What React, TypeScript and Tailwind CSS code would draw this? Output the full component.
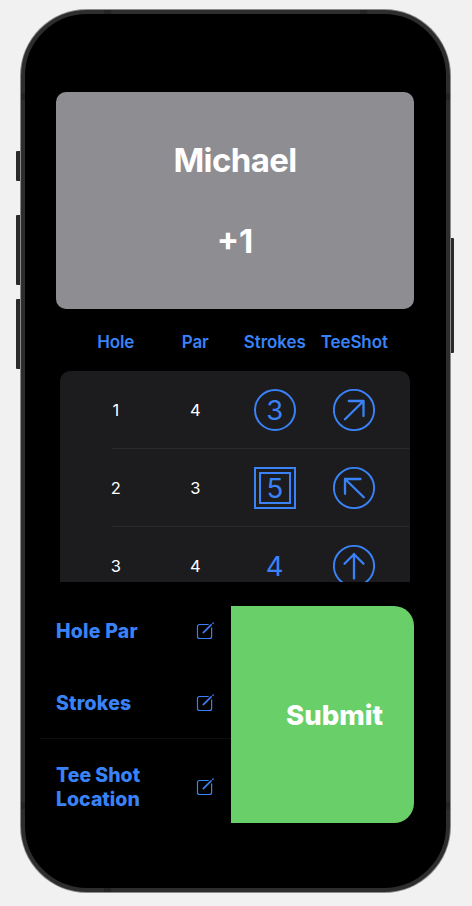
type IconProps = { className?: string };

const SANS = "font-['Inter','Liberation_Sans',sans-serif]";

const ARROWS = {
  right: 'M12 30.3 30.5 12M15.8 12H30.5V27',
  left: 'M30.8 30.3 12 12M27.5 12H12V26.8',
  up: 'M21 33.5V9M11.5 18.8 21 9.2 30.5 18.8',
};

function ShotIcon({ dir }: { dir: keyof typeof ARROWS }) {
  return (
    <svg className="size-[42px] shrink-0" viewBox="0 0 42 42" fill="none" stroke="#3a82f7" strokeLinecap="round" strokeLinejoin="round">
      <circle cx="21" cy="21" r="20.1" strokeWidth="1.9" />
      <path d={ARROWS[dir]} strokeWidth="2.3" />
    </svg>
  );
}

function EditIcon({ className = '' }: IconProps) {
  return (
    <svg className={`h-[17px] w-[17px] shrink-0 overflow-visible ${className}`} viewBox="0 0 17 17" fill="none" stroke="#3a82f7" strokeLinecap="round">
      <path d="M11.2 1.5H2.5a2 2 0 0 0-2 2v10a2 2 0 0 0 2 2h10.1a2 2 0 0 0 2-2V4.8" strokeWidth="1.2" />
      <path d="M6.3 9.6 14.1 1.9M15.9.2 16.1 0" strokeWidth="1.6" />
    </svg>
  );
}

function Strokes({ value, mark }: { value: number; mark: string }) {
  const digit = <span className="pt-0.5 text-[27.5px] leading-none font-normal">{value}</span>;
  if (mark === 'birdie') {
    return <div className="flex size-[42px] items-center justify-center rounded-full border-2 border-[#3a82f7]">{digit}</div>;
  }
  if (mark === 'double') {
    return (
      <div className="flex size-[42px] items-center justify-center border-2 border-[#3a82f7]">
        <div className="flex size-8 items-center justify-center border-2 border-[#3a82f7]">{digit}</div>
      </div>
    );
  }
  return <div className="flex size-[42px] items-center justify-center pt-px">{digit}</div>;
}

const HOLES: { hole: number; par: number; strokes: number; mark: string; dir: keyof typeof ARROWS }[] = [
  { hole: 1, par: 4, strokes: 3, mark: 'birdie', dir: 'right' },
  { hole: 2, par: 3, strokes: 5, mark: 'double', dir: 'left' },
  { hole: 3, par: 4, strokes: 4, mark: 'par', dir: 'up' },
];

function Phone({ children }: { children: React.ReactNode }) {
  return (
    <div className="flex h-[906px] w-[472px] items-start bg-[#f1f1f1] pt-[9px] pl-4">
      <div className="flex w-1 flex-col pt-[142px]">
        <div className="h-[30px] rounded-l-[1px] bg-[#2a2a2a]" />
        <div className="mt-[34px] h-[70px] rounded-l-[1px] bg-[#2a2a2a]" />
        <div className="mt-[14px] h-[70px] rounded-l-[1px] bg-[#2a2a2a]" />
      </div>
      <div className="h-[884px] w-[431px] rounded-[67px] bg-[#8b8b8b] p-px">
        <div className="relative h-full w-full rounded-[66px] border-4 border-[#2d2d2d] bg-black">
          <i className="absolute -top-1 left-[79px] h-1 w-[7px] bg-[#242424]" />
          <i className="absolute -top-1 right-[79px] h-1 w-[7px] bg-[#242424]" />
          <i className="absolute -bottom-1 left-[79px] h-1 w-[7px] bg-[#242424]" />
          <i className="absolute top-[79px] -left-1 h-[7px] w-1 bg-[#242424]" />
          <i className="absolute top-[79px] -right-1 h-[7px] w-1 bg-[#242424]" />
          <i className="absolute bottom-[79px] -left-1 h-[7px] w-1 bg-[#242424]" />
          <i className="absolute -right-1 bottom-[79px] h-[7px] w-1 bg-[#242424]" />
          {children}
        </div>
      </div>
      <div className="mt-[229px] h-[115px] w-[3px] rounded-r-[1px] bg-[#2a2a2a]" />
    </div>
  );
}

export default function App() {
  return (
    <Phone>
      <div className={`flex flex-col pt-[78px] pr-8 pl-[31px] ${SANS}`}>
        <section className="flex h-[217px] flex-col items-center rounded-[10px] bg-[#8e8d92] pt-12 text-[33px] leading-10 font-bold text-white">
          <h1 className="tracking-[-0.6px]">Michael</h1>
          <p className="mt-[41px]">+1</p>
        </section>

        <div className="flex h-[62px] items-center pt-1.5 pl-5 text-[17px] font-semibold tracking-[-0.1px] text-[#3a82f7]">
          <span className="w-[79.5px] text-center">Hole</span>
          <span className="w-[79.5px] text-center">Par</span>
          <span className="w-[79.5px] text-center">Strokes</span>
          <span className="w-[79.5px] text-center">TeeShot</span>
        </div>

        <div className="mx-1 h-[211px] overflow-hidden rounded-t-[10px] bg-[#1c1c1e]">
          {HOLES.map((h, i) => (
            <div key={h.hole}>
              <div className="flex h-[77px] items-center pl-4 text-[16.5px] text-white">
                <span className="w-[79.5px] pt-0.5 text-center">{h.hole}</span>
                <span className="w-[79.5px] pt-0.5 text-center">{h.par}</span>
                <div className="flex w-[79.5px] justify-center text-[#3a82f7]">
                  <Strokes value={h.strokes} mark={h.mark} />
                </div>
                <div className="flex w-[79.5px] justify-center">
                  <ShotIcon dir={h.dir} />
                </div>
              </div>
              {i < 2 && <div className="ml-[52px] h-px bg-[#29292b]" />}
            </div>
          ))}
        </div>

        <div className="mt-6 -ml-4 flex h-[217px]">
          <div className="w-[191px] text-[19.5px] leading-6 font-extrabold tracking-[0.2px] text-[#3a82f7]">
            <div className="flex h-[50px] items-center justify-between pr-[17px] pl-4">
              <span>Hole Par</span>
              <EditIcon />
            </div>
            <div className="mt-[22px] flex h-[50px] items-center justify-between pr-[17px] pl-4">
              <span>Strokes</span>
              <EditIcon />
            </div>
            <div className="mt-[10px] h-px bg-[#0d0d0e]" />
            <div className="mt-6 flex items-center justify-between pr-[17px] pl-4">
              <span className="tracking-normal">
                Tee Shot
                <br />
                Location
              </span>
              <EditIcon />
            </div>
          </div>
          <button className="flex flex-1 items-center justify-center rounded-r-[20px] bg-[#69cf69] pt-0.5 pl-6 text-[27.5px] font-extrabold text-white">
            Submit
          </button>
        </div>
      </div>
    </Phone>
  );
}
